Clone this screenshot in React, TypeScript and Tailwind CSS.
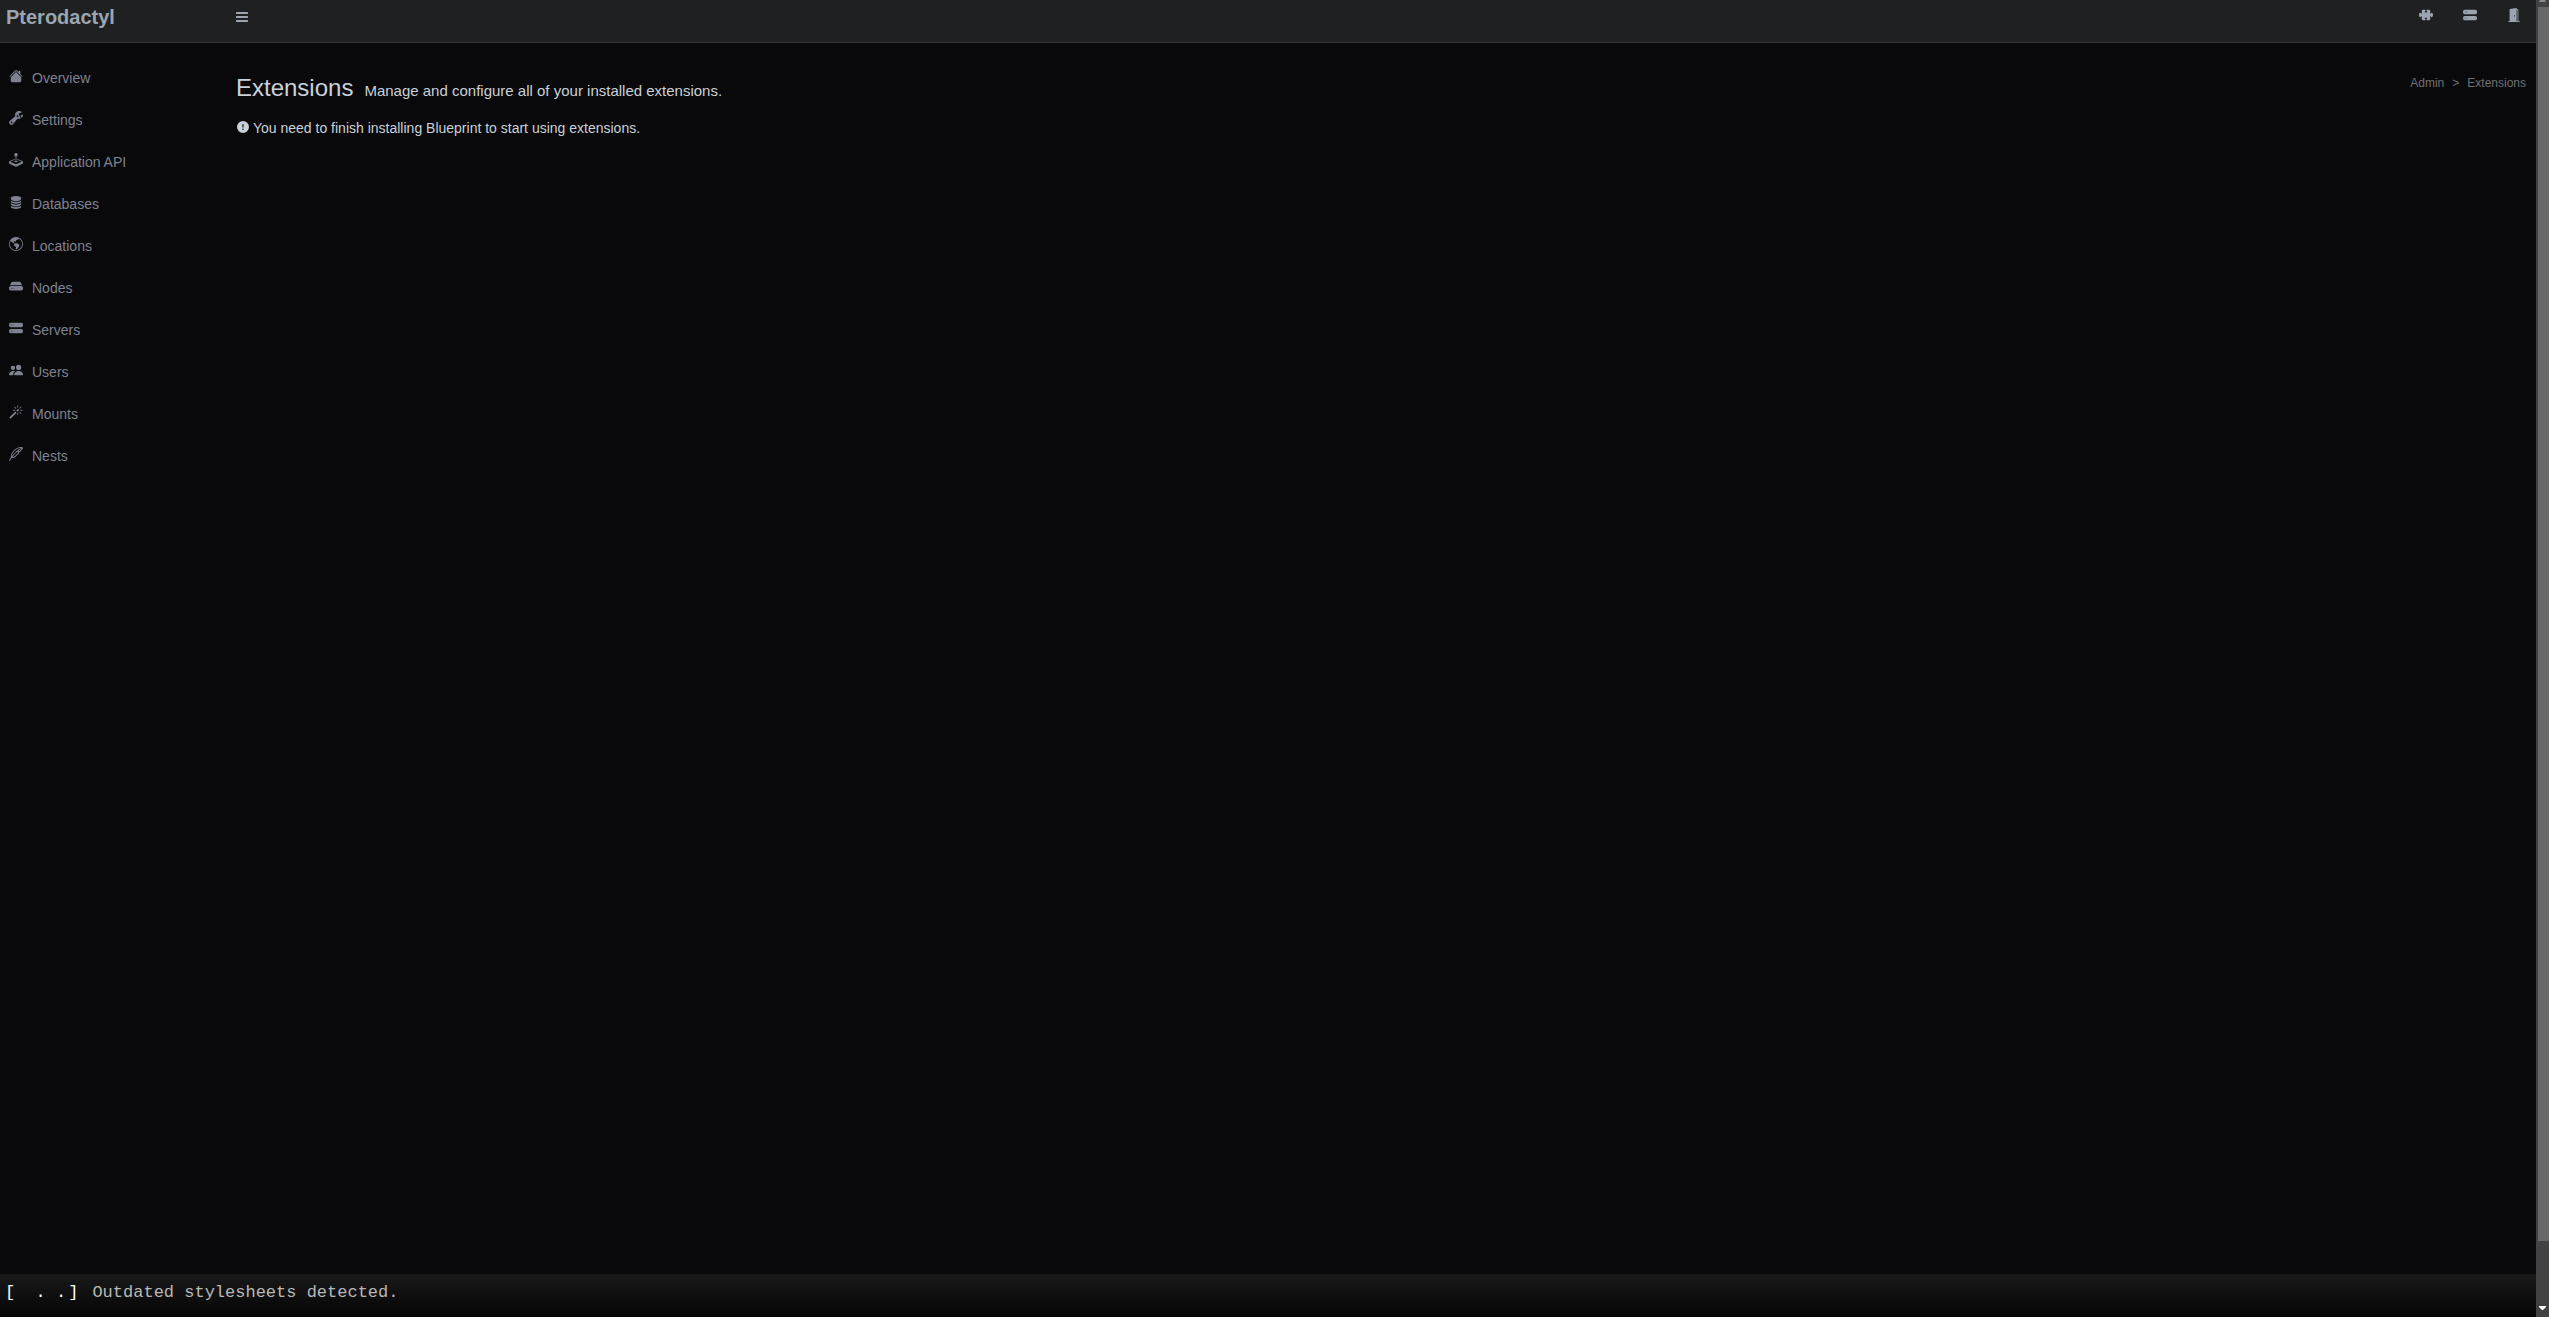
import {
  BsHouseFill, BsWrenchAdjustable, BsJoystick, BsDatabaseFill, BsGlobeAmericas, BsHddFill,
  BsHddStackFill, BsPeopleFill, BsMagic, BsFeather, BsPuzzleFill, BsDoorOpenFill, BsExclamationCircleFill,
} from "react-icons/bs";

const links = [
  { label: "Overview", Icon: BsHouseFill },
  { label: "Settings", Icon: BsWrenchAdjustable },
  { label: "Application API", Icon: BsJoystick },
  { label: "Databases", Icon: BsDatabaseFill },
  { label: "Locations", Icon: BsGlobeAmericas },
  { label: "Nodes", Icon: BsHddFill },
  { label: "Servers", Icon: BsHddStackFill },
  { label: "Users", Icon: BsPeopleFill },
  { label: "Mounts", Icon: BsMagic },
  { label: "Nests", Icon: BsFeather },
];

const actions = [
  { label: "Extensions", Icon: BsPuzzleFill },
  { label: "Exit admin control", Icon: BsHddStackFill },
  { label: "Logout", Icon: BsDoorOpenFill },
];

function Header() {
  return (
    <header className="flex h-[43px] items-start border-b border-[#363839] bg-[#1f2021] text-[#9aa5b1]">
      <a href="#" className="w-[230px] pt-0.5 pl-1.5 text-xl leading-[30px] font-bold">Pterodactyl</a>
      <button type="button" aria-label="Toggle navigation" className="mt-2.5 ml-1.5">
        <svg width="12" height="14" viewBox="0 0 12 14" fill="currentColor">
          <rect y="2" width="12" height="2" rx=".5" />
          <rect y="6" width="12" height="2" rx=".5" />
          <rect y="10" width="12" height="2" rx=".5" />
        </svg>
      </button>
      <nav className="mt-2 mr-[15px] ml-auto flex gap-[30px]">
        {actions.map(({ label, Icon }) => (
          <a key={label} href="#" aria-label={label}><Icon size={14} /></a>
        ))}
      </nav>
    </header>
  );
}

function Sidebar() {
  return (
    <nav className="flex w-[230px] shrink-0 flex-col pt-3.5 text-sm text-[#7f8290]">
      {links.map(({ label, Icon }) => (
        <a key={label} href="#" className="flex h-[42px] items-center gap-[9px] pl-[9px]">
          <Icon size={14} className="mb-1" />
          <span>{label}</span>
        </a>
      ))}
    </nav>
  );
}

function Scrollbar() {
  return (
    <div aria-hidden="true" className="flex w-[13px] flex-col items-center bg-[#424242]">
      <svg width="9" height="7" viewBox="0 0 9 7" fill="#8a8a8a"><path d="M2 0h5l1 2H1z" /></svg>
      <div className="ml-0.5 w-[11px] grow bg-[#686868]" />
      <div className="flex h-[76px] items-end pb-1.5">
        <svg width="9" height="5" viewBox="0 0 9 5" fill="#fff"><path d="M1 0h7v1L5 4H4L1 1z" /></svg>
      </div>
    </div>
  );
}

export default function App() {
  return (
    <div className="min-h-screen bg-white pb-2 font-['Liberation_Sans',Arial,sans-serif]">
      <div className="flex min-h-[calc(100vh-8px)] bg-[#09090b]">
        <div className="flex grow flex-col">
          <Header />
          <div className="flex grow">
            <Sidebar />
            <main className="grow pt-[30px] pr-2.5 pl-1.5 text-[#cad1d8]">
              <div className="flex items-start justify-between">
                <h1 className="text-2xl leading-[30px]">
                  Extensions<small className="ml-[11px] text-[15px]">Manage and configure all of your installed extensions.</small>
                </h1>
                <nav aria-label="Breadcrumb" className="flex gap-2 text-xs leading-5 text-[#6f7073]">
                  <a href="#">Admin</a>
                  <span>&gt;</span>
                  <a href="#">Extensions</a>
                </nav>
              </div>
              <p className="mt-3 flex items-center gap-1 pl-px text-sm leading-5">
                <BsExclamationCircleFill size={12} className="mb-0.5" />
                You need to finish installing Blueprint to start using extensions.
              </p>
            </main>
          </div>
          <footer className="flex h-[43px] items-center gap-3.5 bg-linear-to-b from-[#191919] to-[#060606] px-[5px] pb-1.5 font-['Liberation_Mono',monospace] text-[17px] text-[#b8b8b8]">
            <span className="flex whitespace-pre text-white">
              {"[  . ."}
              <span className="ml-0.5">]</span>
            </span>
            <span>Outdated stylesheets detected.</span>
          </footer>
        </div>
        <Scrollbar />
      </div>
    </div>
  );
}
